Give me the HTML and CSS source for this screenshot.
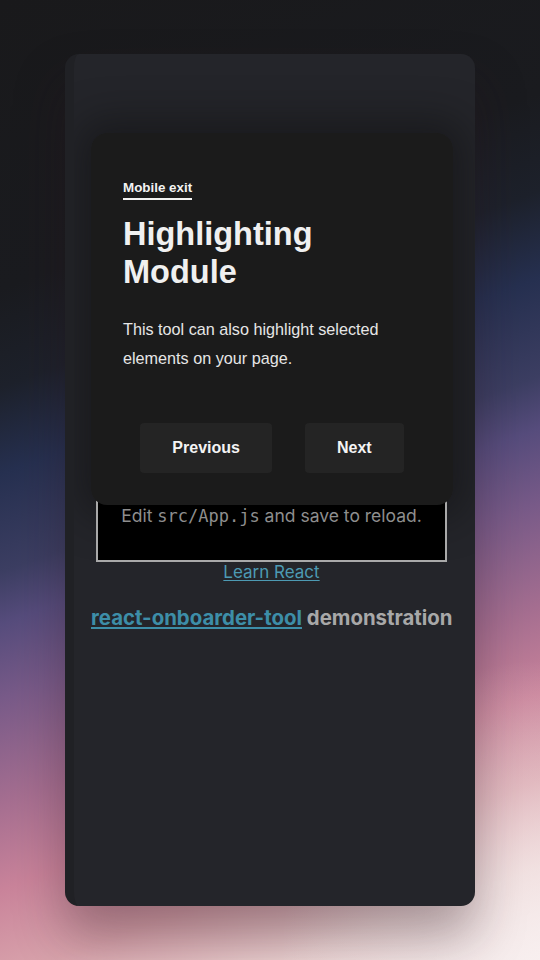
FILE: index.html
```html
<!DOCTYPE html>
<html lang="en">
<head>
<meta charset="utf-8">
<title>react-onboarder-tool demonstration</title>
<link rel="stylesheet" href="styles.css">
</head>
<body>
  <div class="window">
    <div class="app">
      <div class="app-header">
        <p class="edit">Edit <code>src/App.js</code> and save to reload.</p>
      </div>
      <a class="learn" href="#">Learn React</a>
      <h2 class="demo"><a href="#">react-onboarder-tool</a> demonstration</h2>
    </div>

    <div class="tour-shadow"></div>
    <div class="tour-card">
      <span class="step-label">Mobile exit</span>
      <h1 class="tour-title">Highlighting Module</h1>
      <p class="tour-text">This tool can also highlight selected elements on your page.</p>
      <div class="tour-actions">
        <button class="tour-btn">Previous</button>
        <button class="tour-btn">Next</button>
      </div>
    </div>
  </div>
</body>
</html>
```

FILE: styles.css
```css
html, body {
  margin: 0;
  padding: 0;
  height: 960px;
  overflow: hidden;
}

body {
  background:
    radial-gradient(ellipse 260px 300px at 100% 100%, rgba(248, 240, 240, 0.75), rgba(248, 240, 240, 0) 100%),
    linear-gradient(160deg, #19191b 0%, #1a1b1f 25%, #1d212b 33.5%, #263050 41%, #3c3e62 49.5%, #564c7c 54%, #785a88 60.5%, #a56e90 69.5%, #c9839a 77%, #d8a2ab 84.5%, #ead0d0 92%, #f6ecec 100%);
  padding-top: 54px;
  box-sizing: border-box;
}

.window {
  position: relative;
  width: 410px;
  height: 852px;
  margin: 0 auto;
  background: #24252a;
  border-radius: 14px;
  box-shadow: 0 30px 50px rgba(40, 20, 30, 0.35);
  overflow: hidden;
  border-left: 9px solid #202125;
  box-sizing: border-box;
}

.app {
  position: relative;
  z-index: 1;
  display: flex;
  flex-direction: column;
  align-items: stretch;
  padding-top: 387px;
  font-family: Inter, "Noto Sans", sans-serif;
}

.app-header {
  margin: 0 28px 0 22px;
  height: 121px;
  background: #000;
  border: 2px solid #a9a9a9;
  border-top: none;
  box-sizing: border-box;
  display: flex;
  flex-direction: column;
  justify-content: flex-end;
}

.edit {
  margin: 0 0 34px;
  text-align: center;
  font-size: 17.5px;
  line-height: 20px;
  color: #8e8e8e;
}

.edit code {
  font-family: "DejaVu Sans Mono", monospace;
  font-size: 17px;
  color: #8e8e8e;
}

.learn {
  align-self: center;
  margin-left: -6px;
  font-size: 17px;
  line-height: 20px;
  color: #4d9ab3;
  text-decoration: underline;
  text-underline-offset: 2px;
}

.demo {
  margin: 24px 0 0 17px;
  font-size: 20.4px;
  line-height: 24px;
  font-weight: 700;
  color: #a8a8a8;
  white-space: nowrap;
}

.demo a {
  color: #3d8ea8;
  text-decoration: underline;
  text-underline-offset: 2px;
}

.tour-shadow {
  position: absolute;
  z-index: 0;
  left: 17px;
  top: 79px;
  width: 362px;
  height: 372px;
  border-radius: 16px;
  box-shadow: 0 0 36px 14px rgba(18, 18, 20, 0.55);
}

.tour-card {
  position: absolute;
  z-index: 2;
  left: 17px;
  top: 79px;
  width: 362px;
  height: 372px;
  box-sizing: border-box;
  padding: 47px 32px 32px;
  background: #1b1b1b;
  border-radius: 16px;
  font-family: "Liberation Sans", Arial, sans-serif;
  color: #f2f2f2;
  display: flex;
  flex-direction: column;
  align-items: flex-start;
}

.step-label {
  display: inline-block;
  font-size: 13.4px;
  line-height: 15px;
  font-weight: 700;
  color: #f2f2f2;
  padding-bottom: 3px;
  border-bottom: 2px solid #f2f2f2;
}

.tour-title {
  margin: 16px 0 0;
  font-size: 32.5px;
  line-height: 37.5px;
  font-weight: 700;
  color: #f0f0f0;
  width: 230px;
}

.tour-text {
  margin: 24px 0 0;
  font-size: 16.2px;
  line-height: 29px;
  color: #e6e6e6;
}

.tour-actions {
  margin-top: auto;
  align-self: stretch;
  display: flex;
  justify-content: center;
  gap: 33px;
}

.tour-btn {
  height: 50px;
  padding: 0 32px;
  border: none;
  border-radius: 4px;
  background: #242424;
  color: #f4f4f4;
  font-family: "Liberation Sans", Arial, sans-serif;
  font-size: 16px;
  font-weight: 700;
}
```
